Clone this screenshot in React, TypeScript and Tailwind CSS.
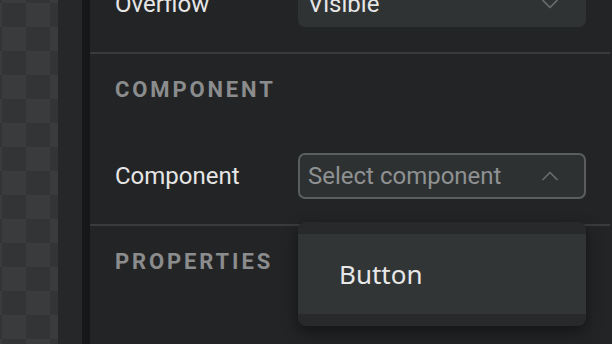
import { ChevronDown, ChevronUp } from "lucide-react";

function Divider() {
  return <div className="mr-[2px] h-[2px] bg-[#3a3b3c]" />;
}

export default function App() {
  return (
    <div className="flex h-[344px] w-[612px] overflow-hidden bg-[#232425] font-['Roboto',sans-serif]">
      {/* canvas */}
      <div className="h-full w-[58px] bg-[#333435] bg-[repeating-conic-gradient(#3a3b3c_0_25%,#333435_0_50%)] bg-[length:48px_48px] bg-[position:2px_3px]" />
      <div className="h-full w-[24px] bg-[#262728]" />
      <div className="h-full w-[8px] bg-[#161718]" />

      {/* panel */}
      <div className="relative flex-1">
        <div className="-mt-[19px]">
          {/* layout section, tail */}
          <div className="flex items-center pb-[25px] pl-[25px] pr-[26px]">
            <span className="w-[183px] text-[24px] text-[#e6e6e6]">Overflow</span>
            <div className="flex h-[46px] flex-1 items-center justify-between rounded-[7px] bg-[#303334] pl-[10px] pr-[22px] text-[24px] text-[#e6e6e6]">
              <span>Visible</span>
              <ChevronDown size={28} strokeWidth={1.5} className="text-[#6a6c6e]" />
            </div>
          </div>
          <Divider />

          {/* component section */}
          <div className="pb-[25px] pl-[25px] pr-[26px] pt-[24px]">
            <h2 className="text-[22px] leading-[24px] font-bold tracking-[0.13em] text-[#8b8c8d]">COMPONENT</h2>
            <div className="mt-[51px] flex items-center">
              <span className="w-[183px] text-[24px] text-[#e6e6e6]">Component</span>
              <div className="flex h-[46px] flex-1 items-center justify-between rounded-[7px] border-2 border-[#5b5e60] bg-[#2e3132] pl-[8px] pr-[20px] text-[24px] text-[#8f9192]">
                <span>Select component</span>
                <ChevronUp size={28} strokeWidth={1.5} className="text-[#6a6c6e]" />
              </div>
            </div>
          </div>
          <Divider />

          {/* properties section */}
          <div className="pl-[25px] pt-[24px]">
            <h2 className="text-[22px] leading-[24px] font-bold tracking-[0.13em] text-[#8b8c8d]">PROPERTIES</h2>
          </div>
        </div>

        {/* dropdown menu */}
        <div className="absolute left-[208px] top-[222px] w-[288px] rounded-[8px] bg-[#28292a] py-[12px] shadow-[0_6px_16px_rgba(0,0,0,0.45)]">
          <div className="flex h-[80px] items-center bg-[#323536] pl-[41px] font-['Noto_Sans',sans-serif] text-[26px] text-[#e8e8e8]">
            Button
          </div>
        </div>
      </div>
    </div>
  );
}
